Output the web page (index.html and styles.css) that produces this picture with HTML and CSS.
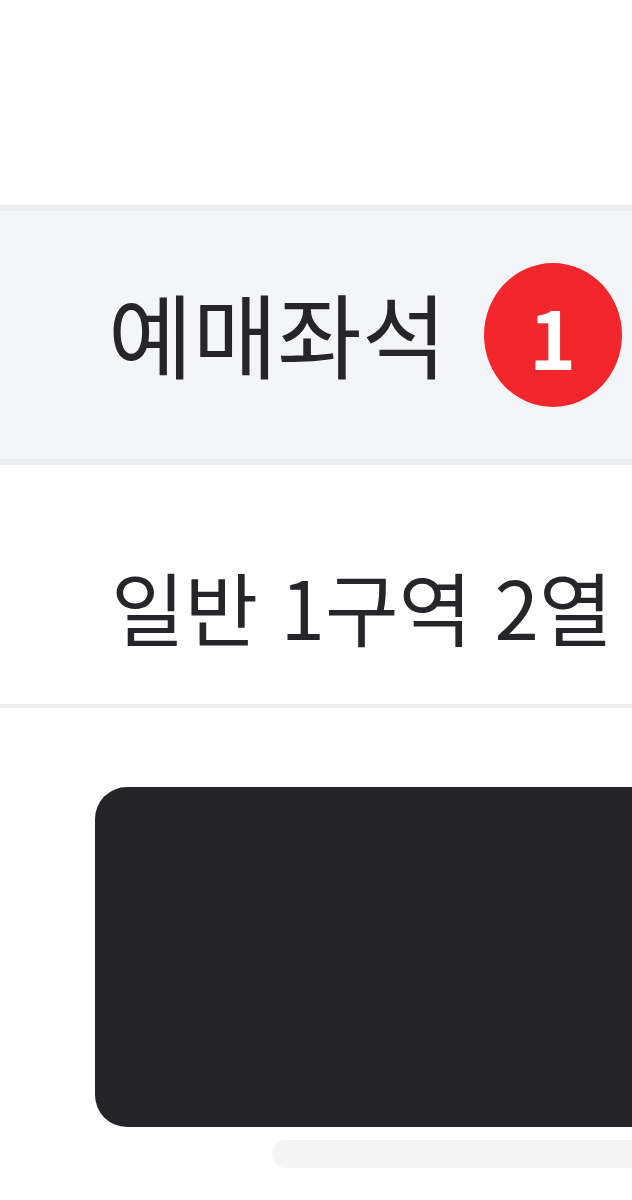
FILE: index.html
```html
<!DOCTYPE html>
<html lang="ko">
<head>
  <meta charset="UTF-8" />
  <meta name="viewport" content="width=device-width, initial-scale=1.0"/>
  <title>예매좌석</title>
  <link rel="stylesheet" href="styles.css">
</head>
<body>
  <div class="top"></div>
  <section class="seat-head">
    <h2>예매좌석</h2>
    <span class="badge">1</span>
  </section>
  <section class="seat-info">
    <p>일반 1구역 2열</p>
  </section>
  <main class="ticket-wrap">
    <div class="ticket"></div>
    <div class="ticket-shadow"></div>
  </main>
</body>
</html>
```

FILE: styles.css
```css
body {
  margin: 0;
  font-family: "Noto Sans CJK KR", "Noto Sans", sans-serif;
  background: #fff;
  color: #25252a;
  overflow-x: hidden;
}

.top {
  height: 205px;
}

.seat-head {
  display: flex;
  align-items: center;
  gap: 37px;
  height: 248px;
  padding-left: 108px;
  background: #f4f5f9;
  border-top: 6px solid #eceef1;
  border-bottom: 6px solid #eceef1;
}

.seat-head h2 {
  margin: 0 0 6px;
  flex-shrink: 0;
  white-space: nowrap;
  font-size: 92px;
  font-weight: 400;
  line-height: 1;
}

.badge {
  display: flex;
  align-items: center;
  justify-content: center;
  width: 138px;
  height: 144px;
  flex-shrink: 0;
  border-radius: 50%;
  background: #f2262b;
  color: #fff;
  font-size: 80px;
  font-weight: 700;
  line-height: 1;
}

.seat-info {
  height: 239px;
  border-bottom: 4px solid #eceef0;
  display: flex;
  align-items: flex-end;
  padding-left: 111px;
}

.seat-info p {
  margin: 0 0 59px;
  white-space: nowrap;
  font-size: 80px;
  line-height: 1;
}

.ticket-wrap {
  padding: 79px 0 0 95px;
}

.ticket {
  width: 600px;
  height: 340px;
  background: #252529;
  border-radius: 32px;
}

.ticket-shadow {
  margin: 13px 0 0 177px;
  width: 500px;
  height: 28px;
  background: #f4f4f4;
  border-radius: 14px;
}
```
